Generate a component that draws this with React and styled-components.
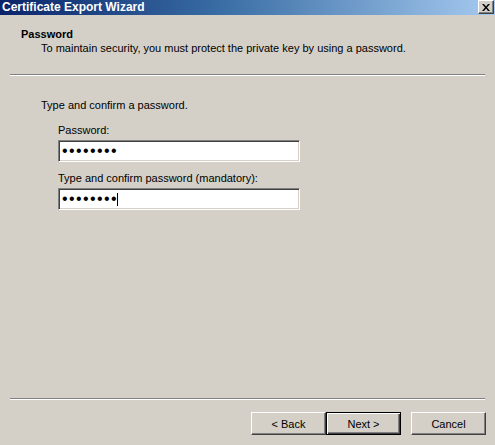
import styled, { createGlobalStyle, css } from "styled-components";

const GlobalStyle = createGlobalStyle`
  html, body {
    margin: 0;
    padding: 0;
    background: #d4d0c8;
  }
  * {
    box-sizing: border-box;
  }
`;

const Window = styled.div`
  width: 495px;
  height: 445px;
  background: #d4d0c8;
  display: flex;
  flex-direction: column;
  font-family: "Liberation Sans", Arial, sans-serif;
  font-size: 11px;
  color: #000;
  overflow: hidden;
`;

const TitleBar = styled.div`
  height: 15px;
  flex-shrink: 0;
  display: flex;
  align-items: center;
  justify-content: space-between;
  padding: 0 1px 0 2px;
  background: linear-gradient(to right, #0a246a 0%, #3a6ea5 45%, #a6caf0 100%);
`;

const Title = styled.span`
  color: #fff;
  font-weight: bold;
  font-size: 12px;
  line-height: 15px;
`;

const CloseButton = styled.div`
  width: 16px;
  height: 14px;
  margin-top: -1px;
  background: #d4d0c8;
  border: 1px solid;
  border-color: #fff #404040 #404040 #fff;
  box-shadow: inset -1px -1px 0 #808080;
  display: flex;
  align-items: center;
  justify-content: center;
`;

const Header = styled.div`
  padding: 12px 0 0 21px;
`;

const Heading = styled.div`
  font-weight: bold;
  line-height: 14px;
`;

const SubHeading = styled.div`
  line-height: 14px;
  padding-left: 20px;
`;

const Separator = styled.div`
  margin: ${(p) => p.$top || 0}px 10px 0 10px;
  height: 2px;
  flex-shrink: 0;
  border-top: 1px solid #808080;
  border-bottom: 1px solid #fff;
`;

const Body = styled.div`
  flex: 1;
  padding: 22px 0 0 41px;
`;

const Intro = styled.div`
  line-height: 14px;
`;

const Field = styled.div`
  padding-left: 17px;
  margin-top: ${(p) => p.$gap}px;
`;

const Label = styled.div`
  line-height: 14px;
`;

const Input = styled.div`
  margin-top: 3px;
  width: 242px;
  height: 22px;
  background: #fff;
  border: 1px solid;
  border-color: #808080 #fff #fff #808080;
  box-shadow: inset 1px 1px 0 #404040, inset -1px -1px 0 #d4d0c8;
  display: flex;
  align-items: center;
  padding-left: 3px;
`;

const Dots = styled.span`
  font-size: 16px;
  letter-spacing: 1.4px;
  line-height: 14px;
  font-family: "Liberation Sans", Arial, sans-serif;
`;

const Caret = styled.span`
  display: inline-block;
  width: 1px;
  height: 13px;
  background: #000;
  margin-left: -1px;
`;

const ButtonRow = styled.div`
  display: flex;
  justify-content: flex-end;
  padding: 12px 9px 10px 0;
  flex-shrink: 0;
`;

const Button = styled.div`
  width: 75px;
  height: 23px;
  margin-left: ${(p) => p.$gap || 0}px;
  background: #d4d0c8;
  display: flex;
  align-items: center;
  justify-content: center;
  border: 1px solid;
  border-color: #fff #404040 #404040 #fff;
  box-shadow: inset -1px -1px 0 #808080;

  ${(p) =>
    p.$default &&
    css`
      border: 1px solid #000;
      box-shadow: inset 1px 1px 0 #fff, inset -1px -1px 0 #404040,
        inset -2px -2px 0 #808080;
    `}
`;

function Bullets({ caret }) {
  return (
    <>
      <Dots>{"••••••••"}</Dots>
      {caret && <Caret />}
    </>
  );
}

export default function App() {
  return (
    <>
      <GlobalStyle />
      <Window>
        <TitleBar>
          <Title>Certificate Export Wizard</Title>
          <CloseButton>
            <svg width="8" height="7" viewBox="0 0 8 7">
              <path d="M0 0h2l2 2.5L6 0h2L5 3.5 8 7H6L4 4.5 2 7H0l3-3.5z" fill="#000" />
            </svg>
          </CloseButton>
        </TitleBar>

        <Header>
          <Heading>Password</Heading>
          <SubHeading>
            To maintain security, you must protect the private key by using a password.
          </SubHeading>
        </Header>
        <Separator $top={19} />

        <Body>
          <Intro>Type and confirm a password.</Intro>
          <Field $gap={11}>
            <Label>Password:</Label>
            <Input>
              <Bullets />
            </Input>
          </Field>
          <Field $gap={9}>
            <Label>Type and confirm password (mandatory):</Label>
            <Input>
              <Bullets caret />
            </Input>
          </Field>
        </Body>

        <Separator />
        <ButtonRow>
          <Button>&lt; Back</Button>
          <Button $default>Next &gt;</Button>
          <Button $gap={10}>Cancel</Button>
        </ButtonRow>
      </Window>
    </>
  );
}
